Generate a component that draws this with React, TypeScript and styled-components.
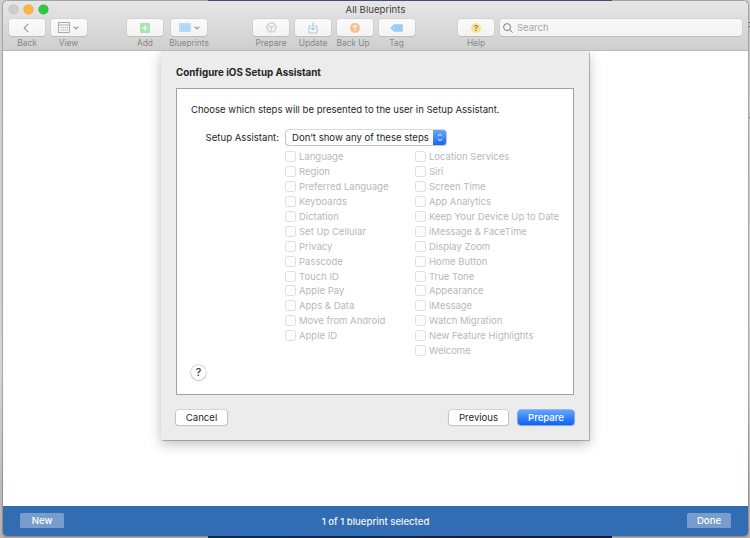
import React from 'react';
import styled, { createGlobalStyle } from 'styled-components';

const GlobalStyle = createGlobalStyle`
  * { box-sizing: border-box; }
  html, body { margin: 0; padding: 0; }
  body { overflow: hidden; font-family: Inter, sans-serif; font-size: 9.6px; color: #262626; }
  button { font-family: inherit; margin: 0; padding: 0; }
`;

const Desktop = styled.div`
  width: 750px;
  height: 538px;
  padding: 1px 2px 2px 3px;
  background:
    linear-gradient(#4f6398, #4f6398) 208px 0 / 404px 2px no-repeat,
    linear-gradient(90deg, #12305c, #19305a 47%, #252449 55%, #1d2146) 208px 535px / 404px 3px no-repeat,
    linear-gradient(#555, #555) 749px 22px / 1px 1px no-repeat,
    linear-gradient(#555, #555) 749px 26px / 1px 1px no-repeat,
    linear-gradient(#777, #777) 749px 117px / 1px 1px no-repeat,
    linear-gradient(#cfcfcf, #d6d4d4 70%, #b9b0ad);
`;

const Window = styled.div`
  height: 535px;
  display: flex;
  flex-direction: column;
  border-radius: 5px 5px 4px 4px;
  overflow: hidden;
  background: #fff;
  box-shadow: 0 0 1px 0.5px rgba(0, 0, 0, 0.23);
`;

const Header = styled.header`
  height: 50px;
  flex: none;
  background: linear-gradient(#e6e6e6, #cfcfcf);
  border-bottom: 1px solid #b8b8b8;
`;

const TitleBar = styled.div`
  height: 17px;
  display: grid;
  grid-template-columns: 60px 1fr 60px;
  align-items: center;
`;

const Lights = styled.div`
  display: flex;
  gap: 6px;
  padding: 0 0 1px 6px;
`;

const Light = styled.span<{ $fill: string; $edge: string }>`
  width: 9px;
  height: 9px;
  border-radius: 50%;
  background: ${(p) => p.$fill};
  box-shadow: 0 0 0 0.5px ${(p) => p.$edge};
`;

const Title = styled.div`
  text-align: center;
  font-size: 9.6px;
  letter-spacing: 0.03px;
  line-height: 12px;
  color: #404040;
  padding-top: 1px;
`;

const Toolbar = styled.div`
  display: flex;
  padding: 1px 6px 0 6px;
`;

const Tool = styled.div<{ $before?: number }>`
  width: 36px;
  flex: none;
  margin-left: ${(p) => p.$before ?? 0}px;
  display: flex;
  flex-direction: column;
  align-items: center;
`;

const ToolButton = styled.button`
  width: 36px;
  height: 17px;
  flex: none;
  border: 0;
  border-radius: 3px;
  background: linear-gradient(#fafafa, #f3f3f3);
  box-shadow: 0 0 0 0.5px #c6c6c6, 0 1px 0.5px #b5b5b5;
  display: flex;
  align-items: center;
  justify-content: center;
  gap: 3px;
  svg { display: block; }
`;

const ToolLabel = styled.span<{ $nudge?: number }>`
  margin-top: 1px;
  margin-right: ${(p) => p.$nudge ?? 0}px;
  font-size: 8.3px;
  line-height: 12px;
  letter-spacing: 0.02px;
  white-space: nowrap;
  color: #888;
`;

const Search = styled.div`
  height: 17px;
  flex: 1;
  margin-left: 6px;
  padding-left: 3px;
  border-radius: 3px;
  background: linear-gradient(#f8f8f8, #f3f3f3);
  box-shadow: 0 0 0 0.5px #c6c6c6, 0 1px 0.5px #b5b5b5;
  display: flex;
  align-items: center;
  gap: 4px;
  color: #a8a8a8;
  font-size: 9.5px;
`;

const Content = styled.main`
  flex: 1;
  display: flex;
  justify-content: flex-start;
  align-items: flex-start;
  padding-left: 158px;
  overflow: hidden;
`;

const Sheet = styled.section`
  width: 428px;
  height: 389px;
  padding: 15px 15px 0;
  background: #ececec;
  box-shadow: 0 0 1px 0.5px rgba(0, 0, 0, 0.24), 0 4px 12px rgba(0, 0, 0, 0.26);
`;

const Heading = styled.h1`
  margin: 0;
  height: 22px;
  line-height: 14px;
  font-size: 9.8px;
  font-weight: 700;
  white-space: nowrap;
`;

const Panel = styled.div`
  height: 307px;
  padding: 14px 14px 0;
  border: 1px solid #a1a1a1;
  background: #fff;
  display: flex;
  flex-direction: column;
`;

const Intro = styled.p`
  margin: 0;
  line-height: 14px;
  font-size: 9.55px;
  white-space: nowrap;
`;

const SelectRow = styled.div`
  height: 15px;
  margin-top: 13px;
  display: flex;
  align-items: center;
`;

const SelectLabel = styled.span`
  width: 88px;
  margin-right: 7px;
  text-align: right;
  white-space: nowrap;
  line-height: 15px;
`;

const Select = styled.div`
  width: 160px;
  height: 15px;
  padding-left: 6px;
  border-radius: 3px;
  overflow: hidden;
  box-shadow: 0 0 0 0.5px #bbb, 0 0.5px 1px 0.5px #ccc;
  display: flex;
  justify-content: space-between;
  align-items: center;
  line-height: 15px;
  white-space: nowrap;
`;

const Stepper = styled.span`
  width: 13px;
  height: 15px;
  flex: none;
  display: flex;
  align-items: center;
  justify-content: center;
  background: linear-gradient(#66a8fb, #1467fa);
`;

const Steps = styled.div`
  display: grid;
  grid-template-columns: 130px 1fr;
  padding: 4.2px 0 0 94px;
`;

const Column = styled.div`
  display: flex;
  flex-direction: column;
`;

const Step = styled.label`
  height: 14.93px;
  display: flex;
  align-items: center;
  gap: 3px;
  white-space: nowrap;
  color: #b8b8b8;
  font-size: 9.5px;
`;

const Box = styled.span`
  width: 11px;
  height: 11px;
  flex: none;
  border: 1px solid #dedede;
  border-radius: 2.5px;
  background: #fdfdfd;
`;

const HelpButton = styled.button`
  width: 15px;
  height: 15px;
  margin: 6.8px 0 0;
  border: 0;
  border-radius: 50%;
  background: #fff;
  box-shadow: 0 0 0 0.5px #c3c3c3, 0 0.5px 1px 0.5px #ccc;
  font-size: 10.5px;
  font-weight: 500;
  line-height: 15px;
  color: #333;
`;

const Actions = styled.div`
  display: flex;
  gap: 10px;
  padding-top: 15px;
`;

const PushButton = styled.button<{ $width: number; $primary?: boolean; $alignStart?: boolean }>`
  width: ${(p) => p.$width}px;
  height: 15px;
  margin-right: ${(p) => (p.$alignStart ? 'auto' : '0')};
  border: 0;
  border-radius: 3px;
  font-size: 9.6px;
  font-weight: ${(p) => (p.$primary ? 500 : 400)};
  line-height: 15px;
  color: ${(p) => (p.$primary ? '#fff' : '#262626')};
  background: ${(p) => (p.$primary ? 'linear-gradient(#64a6fb, #0c61fb)' : '#fff')};
  box-shadow: 0 0 0 0.5px ${(p) => (p.$primary ? '#4388ee' : '#c0c0c0')}, 0 0.5px 1px 0.5px #c6c6c6;
`;

const Footer = styled.footer`
  height: 30px;
  flex: none;
  padding: 0 17px 1px;
  display: grid;
  grid-template-columns: 44px 1fr 44px;
  align-items: center;
  background: #326cb3;
  color: #f1f5fb;
`;

const FooterButton = styled.button`
  height: 15px;
  border: 0;
  border-radius: 1.5px;
  background: #779dcd;
  color: #fff;
  font-size: 9.6px;
  font-weight: 500;
  line-height: 15px;
`;

const Status = styled.span`
  text-align: center;
  font-size: 9.6px;
  font-weight: 500;
  line-height: 14px;
  padding-top: 2px;
`;

const Chevron = () => (
  <svg width="6" height="4" viewBox="0 0 6 4" fill="none" stroke="#999" strokeWidth="1.2">
    <path d="M.7.7 3 3 5.3.7" />
  </svg>
);

const BackIcon = () => (
  <svg width="8" height="10" viewBox="0 0 8 10" fill="none" stroke="#999" strokeWidth="1.1">
    <path d="M5.3 .8 1.2 5l4.1 4.2" />
  </svg>
);

const ViewIcon = () => (
  <svg width="12" height="11" viewBox="0 0 12 11" fill="none" stroke="#a3a3a3">
    <rect x=".5" y=".5" width="11" height="10" strokeWidth=".9" />
    <path d="M.5 3h11" strokeWidth=".9" />
    <path d="M2.5 5.5h7.5M2.5 8h7.5" strokeWidth="1.2" strokeDasharray="1.2 .9" />
  </svg>
);

const AddIcon = () => (
  <svg width="10" height="10" viewBox="0 0 10 10">
    <rect width="10" height="10" rx=".7" fill="#a6e3b5" />
    <path d="M5 2.2v5.6M2.2 5h5.6" stroke="#fff" strokeWidth="1.2" />
  </svg>
);

const BlueprintIcon = () => (
  <svg width="12" height="9" viewBox="0 0 12 9">
    <rect width="12" height="9" fill="#bddbfc" />
    <path d="M1.8 2.2h9M1.8 4.6h9M1.8 7h9" stroke="#96c3f3" strokeWidth="1.1" strokeDasharray="1.3 1" />
  </svg>
);

const PrepareIcon = () => (
  <svg width="11" height="11" viewBox="0 0 10 10" fill="none" stroke="#ccd4d7">
    <circle cx="5" cy="5" r="3.9" strokeWidth="1.2" />
    <circle cx="5" cy="5" r="4.6" strokeWidth=".6" strokeDasharray=".7 .5" />
    <path d="M5 5V8.5M5 5 2 3.3M5 5l3-1.7" strokeWidth="1" />
    <circle cx="5" cy="5" r="1.1" strokeWidth=".6" />
  </svg>
);

const UpdateIcon = () => (
  <svg width="10" height="12" viewBox="0 0 10 12" fill="none">
    <path d="M3.2 4H1v7h8V4H6.8" stroke="#bcc0c5" strokeWidth="1" />
    <path d="M5 .5v7.3M2.8 5.8 5 8l2.2-2.2" stroke="#84bdf5" strokeWidth="1" />
  </svg>
);

const BackUpIcon = () => (
  <svg width="10" height="10" viewBox="0 0 10 10">
    <circle cx="5" cy="5" r="4.9" fill="#fbbd8c" />
    <path d="M5 8V2.2M2.8 4.3 5 2.1l2.2 2.2" stroke="#fff0e3" strokeWidth="1.1" fill="none" />
  </svg>
);

const TagIcon = () => (
  <svg width="13" height="8" viewBox="0 0 13 8">
    <path d="M4 .3h8.2a.6.6 0 0 1 .6.6v6.2a.6.6 0 0 1-.6.6H4L.2 4Z" fill="#9accf8" />
    <circle cx="3.7" cy="4" r=".7" fill="#eef6fd" />
  </svg>
);

const HelpGlyph = styled.span`
  width: 10px;
  height: 10px;
  border-radius: 50%;
  background: #fbe293;
  color: #86825f;
  font-size: 8px;
  font-weight: 600;
  line-height: 10px;
  text-align: center;
`;

const SearchIcon = () => (
  <svg width="10" height="10" viewBox="0 0 10 10" fill="none" stroke="#7d7d7d" strokeWidth="1">
    <circle cx="4.1" cy="4.1" r="3.5" />
    <path d="m6.6 6.6 3 3" />
  </svg>
);

const StepperIcon = () => (
  <svg width="6" height="9" viewBox="0 0 6 9" fill="none" stroke="#fff" strokeWidth="1">
    <path d="M.9 3.2 3 1.1l2.1 2.1M.9 5.8 3 7.9l2.1-2.1" />
  </svg>
);

const tools = [
  { label: 'Back', icon: <BackIcon /> },
  { label: 'View', icon: <ViewIcon />, menu: true, before: 5.5 },
  { label: 'Add', icon: <AddIcon />, before: 40.5 },
  { label: 'Blueprints', icon: <BlueprintIcon />, menu: true, before: 8 },
  { label: 'Prepare', icon: <PrepareIcon />, before: 46 },
  { label: 'Update', icon: <UpdateIcon />, before: 6 },
  { label: 'Back Up', icon: <BackUpIcon />, before: 5.5, nudge: 3 },
  { label: 'Tag', icon: <TagIcon />, before: 6 },
  { label: 'Help', icon: <HelpGlyph>?</HelpGlyph>, before: 43.5 },
];

const columns = [
  ['Language', 'Region', 'Preferred Language', 'Keyboards', 'Dictation', 'Set Up Cellular', 'Privacy',
    'Passcode', 'Touch ID', 'Apple Pay', 'Apps & Data', 'Move from Android', 'Apple ID'],
  ['Location Services', 'Siri', 'Screen Time', 'App Analytics', 'Keep Your Device Up to Date',
    'iMessage & FaceTime', 'Display Zoom', 'Home Button', 'True Tone', 'Appearance', 'iMessage',
    'Watch Migration', 'New Feature Highlights', 'Welcome'],
];

export default function App() {
  return (
    <Desktop>
      <GlobalStyle />
      <Window>
        <Header>
          <TitleBar>
            <Lights>
              <Light $fill="#cdcdcd" $edge="#b9b9b9" />
              <Light $fill="#fdb63c" $edge="#e0a03a" />
              <Light $fill="#2fc944" $edge="#27ac38" />
            </Lights>
            <Title>All Blueprints</Title>
          </TitleBar>
          <Toolbar>
            {tools.map((t) => (
              <Tool key={t.label} $before={t.before}>
                <ToolButton>
                  {t.icon}
                  {t.menu && <Chevron />}
                </ToolButton>
                <ToolLabel $nudge={t.nudge}>{t.label}</ToolLabel>
              </Tool>
            ))}
            <Search>
              <SearchIcon />
              Search
            </Search>
          </Toolbar>
        </Header>
        <Content>
          <Sheet>
            <Heading>Configure iOS Setup Assistant</Heading>
            <Panel>
              <Intro>Choose which steps will be presented to the user in Setup Assistant.</Intro>
              <SelectRow>
                <SelectLabel>Setup Assistant:</SelectLabel>
                <Select>
                  Don’t show any of these steps
                  <Stepper><StepperIcon /></Stepper>
                </Select>
              </SelectRow>
              <Steps>
                {columns.map((items, i) => (
                  <Column key={i}>
                    {items.map((item) => (
                      <Step key={item}><Box />{item}</Step>
                    ))}
                  </Column>
                ))}
              </Steps>
              <HelpButton>?</HelpButton>
            </Panel>
            <Actions>
              <PushButton $width={51} $alignStart>Cancel</PushButton>
              <PushButton $width={59}>Previous</PushButton>
              <PushButton $width={56} $primary>Prepare</PushButton>
            </Actions>
          </Sheet>
        </Content>
        <Footer>
          <FooterButton>New</FooterButton>
          <Status>1 of 1 blueprint selected</Status>
          <FooterButton>Done</FooterButton>
        </Footer>
      </Window>
    </Desktop>
  );
}
